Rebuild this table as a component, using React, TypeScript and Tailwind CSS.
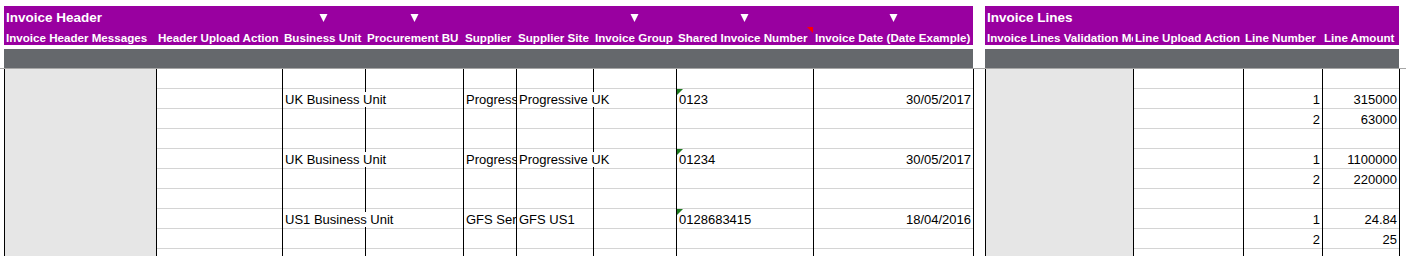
type Col = {
  w: number;
  label: string;
  key?: string;
  gray?: boolean;
  arrow?: boolean;
  note?: boolean;
  flag?: boolean;
  clip?: boolean;
  right?: boolean;
  last?: boolean;
};

type Row = Record<string, string>;

const headerCols: Col[] = [
  { w: 152, label: "Invoice Header Messages", gray: true },
  { w: 126, label: "Header Upload Action", key: "action" },
  { w: 83, label: "Business Unit", key: "bu", arrow: true },
  { w: 98, label: "Procurement BU", key: "pbu", arrow: true },
  { w: 53, label: "Supplier", key: "supplier", clip: true },
  { w: 77, label: "Supplier Site", key: "site" },
  { w: 83, label: "Invoice Group", key: "group", arrow: true },
  { w: 137, label: "Shared Invoice Number", key: "num", arrow: true, note: true, flag: true },
  { w: 160, label: "Invoice Date (Date Example)", key: "date", arrow: true, right: true, last: true },
];

const lineCols: Col[] = [
  { w: 148, label: "Invoice Lines Validation Messages", gray: true },
  { w: 110, label: "Line Upload Action", key: "lineAction" },
  { w: 79, label: "Line Number", key: "line", right: true },
  { w: 77, label: "Line Amount", key: "amount", right: true, last: true },
];

const rows: Row[] = [
  {},
  {
    bu: "UK Business Unit",
    supplier: "Progressive Enterprises",
    site: "Progressive UK",
    num: "0123",
    date: "30/05/2017",
    line: "1",
    amount: "315000",
  },
  { line: "2", amount: "63000" },
  {},
  {
    bu: "UK Business Unit",
    supplier: "Progressive Enterprises",
    site: "Progressive UK",
    num: "01234",
    date: "30/05/2017",
    line: "1",
    amount: "1100000",
  },
  { line: "2", amount: "220000" },
  {},
  {
    bu: "US1 Business Unit",
    supplier: "GFS Services",
    site: "GFS US1",
    num: "0128683415",
    date: "18/04/2016",
    line: "1",
    amount: "24.84",
  },
  { line: "2", amount: "25" },
  {},
];

function DownArrow() {
  return (
    <svg width="9" height="8" viewBox="0 0 9 8" className="mt-[2px]">
      <polygon points="0.5,0 8.5,0 4.5,8" fill="#ffffff" />
    </svg>
  );
}

function HeaderBlock({ title, cols }: { title: string; cols: Col[] }) {
  const width = cols.reduce((s, c) => s + c.w, 0);
  return (
    <div className="flex flex-col shrink-0" style={{ width: width + 1 }}>
      <div className="flex flex-col bg-[#9900a0] text-white font-bold" style={{ width }}>
        {/* title row with filter arrows */}
        <div className="flex h-[21px]">
          {cols.map((c, i) => (
            <div
              key={i}
              className="flex items-center justify-center shrink-0"
              style={{ width: c.w }}
            >
              {i === 0 ? (
                <span className="w-full pl-[2px] pt-[2px] text-[13.5px] leading-[19px] whitespace-nowrap overflow-visible">
                  {title}
                </span>
              ) : c.arrow ? (
                <DownArrow />
              ) : null}
            </div>
          ))}
        </div>
        {/* column labels */}
        <div className="flex h-[18px]">
          {cols.map((c, i) => (
            <div
              key={i}
              className="relative shrink-0 overflow-hidden whitespace-nowrap pl-[2px] pt-[3px] text-[11.6px] leading-[15px]"
              style={{ width: c.w }}
            >
              {c.label}
              {c.note && (
                <svg width="6" height="6" viewBox="0 0 6 6" className="absolute top-0 right-0">
                  <polygon points="0,0 6,0 6,6" fill="#ff0000" />
                </svg>
              )}
            </div>
          ))}
        </div>
      </div>
      <div className="h-[4px]" />
      <div className="h-[19px] bg-[#65686c]" style={{ width }} />
    </div>
  );
}

function BodyBlock({ cols }: { cols: Col[] }) {
  return (
    <div className="flex shrink-0">
      {cols.map((c, i) => (
        <div
          key={i}
          className={`flex flex-col shrink-0 border-l border-black ${c.last ? "border-r" : ""} ${
            c.gray ? "bg-[#e6e6e6]" : "bg-white"
          }`}
          style={{ width: c.w + (c.last ? 1 : 0) }}
        >
          {c.gray
            ? null
            : rows.map((r, j) => {
                const v = c.key ? r[c.key] : undefined;
                return (
                  <div
                    key={j}
                    className={`relative flex items-end h-[20px] shrink-0 border-b border-[#d4d4d4] pb-px whitespace-nowrap ${
                      c.clip ? "overflow-hidden" : ""
                    } ${c.right ? "justify-end pr-[2px]" : "pl-[2px]"}`}
                  >
                    {v && (
                      <span className="relative z-10 bg-white text-[13px] leading-[15px] text-black">
                        {v}
                      </span>
                    )}
                    {v && c.flag && (
                      <svg width="6" height="6" viewBox="0 0 6 6" className="absolute top-0 left-0 z-20">
                        <polygon points="0,0 6,0 0,6" fill="#1f7a1f" />
                      </svg>
                    )}
                  </div>
                );
              })}
        </div>
      ))}
    </div>
  );
}

export default function App() {
  return (
    <div className="w-[1406px] h-[256px] overflow-hidden bg-white font-['Liberation_Sans',Arial,sans-serif]">
      {/* Header bands */}
      <div className="flex pt-[6px] pl-[4px]">
        <HeaderBlock title="Invoice Header" cols={headerCols} />
        <div className="ml-[11px]">
          <HeaderBlock title="Invoice Lines" cols={lineCols} />
        </div>
      </div>

      <div className="h-px w-full bg-[#a6a6a6]" />

      {/* Grid body */}
      <div className="flex pl-[4px]">
        <BodyBlock cols={headerCols} />
        <div className="ml-[11px]">
          <BodyBlock cols={lineCols} />
        </div>
      </div>
    </div>
  );
}
